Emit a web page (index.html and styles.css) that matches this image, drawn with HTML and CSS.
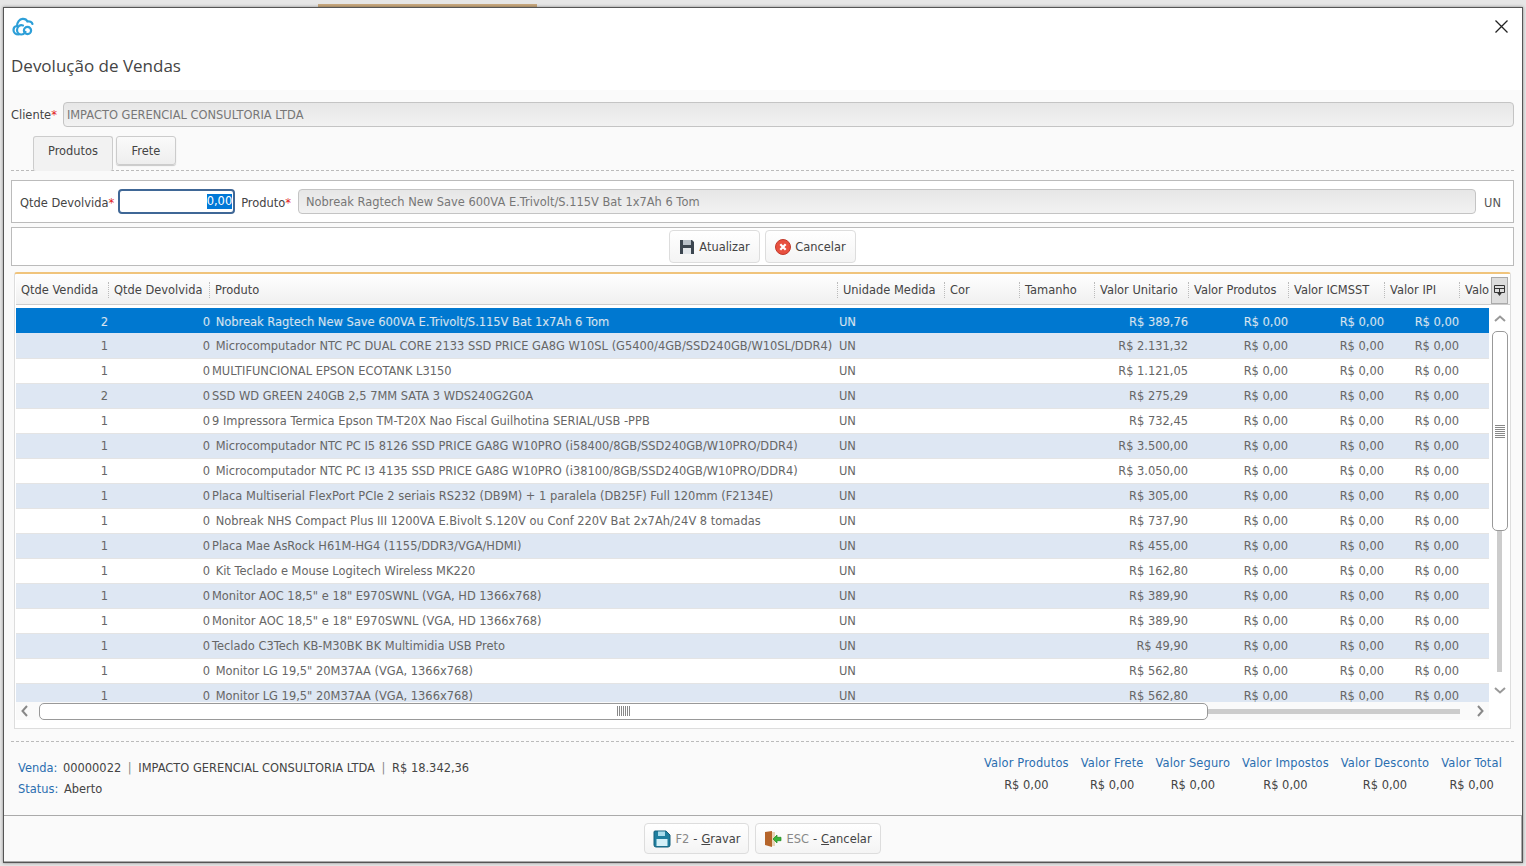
FILE: index.html
```html
<!DOCTYPE html>
<html lang="pt-BR">

<head>
    <meta charset="UTF-8">
    <title>Devolução de Vendas</title>
    <link rel="stylesheet" href="styles.css">
</head>

<body>
    <div class="backdrop">
        <div class="backdrop-tab"></div>
    </div>
    <div class="dialog">
        <div class="dialog-head">
            <div class="head-top">
                <svg class="logo" width="22" height="20" viewBox="0 0 22 20" fill="none" stroke="#2d9fd8" stroke-width="2.2" stroke-linecap="round">
                    <path d="M6.5 18.5C3.5 18.5 1.5 16.5 1.5 14C1.5 11.8 3 10.2 5 10C5 6.5 7.5 3 10.5 2.8C13 2.6 14.8 4 15.5 5.5C17.5 5 20 6 20.5 8" />
                    <path d="M11 9.5C8 8.5 5 10.5 5 14C5 16.8 7 18.5 9.5 18.5C11.5 18.5 12.5 17.5 13.5 16" />
                    <circle cx="15.5" cy="14.5" r="3.6" />
                </svg>
                <svg class="close" width="13" height="13" viewBox="0 0 13 13" stroke="#222" stroke-width="1.3">
                    <path d="M0.5 0.5L12.5 12.5M12.5 0.5L0.5 12.5" />
                </svg>
            </div>
            <h1>Devolução de Vendas</h1>
        </div>

        <div class="dialog-main">
            <div class="client-row">
                <label>Cliente<em>*</em></label>
                <div class="readonly-input client-input">IMPACTO GERENCIAL CONSULTORIA LTDA</div>
            </div>

            <div class="tabs">
                <div class="tab tab-active">Produtos</div>
                <div class="tab">Frete</div>
            </div>

            <div class="panel form-panel">
                <label>Qtde Devolvida<em>*</em></label>
                <div class="qty-input"><span class="selected-text">0,00</span></div>
                <label>Produto<em>*</em></label>
                <div class="readonly-input product-input">Nobreak Ragtech New Save 600VA E.Trivolt/S.115V Bat 1x7Ah 6 Tom</div>
                <span class="unit">UN</span>
            </div>

            <div class="panel button-panel">
                <div class="btn">
                    <svg width="16" height="16" viewBox="0 0 16 16">
                        <path d="M1 1H13L15 3V15H1Z" fill="#3c4650" />
                        <rect x="4" y="1" width="8" height="5" fill="#b8c0c8" />
                        <rect x="4" y="9" width="8" height="6" fill="#e4e8ec" />
                    </svg>
                    Atualizar
                </div>
                <div class="btn">
                    <svg width="16" height="16" viewBox="0 0 16 16">
                        <circle cx="8" cy="8" r="7.5" fill="#e8503f" stroke="#c0392b" />
                        <path d="M5.3 5.3L10.7 10.7M10.7 5.3L5.3 10.7" stroke="#fff" stroke-width="2.2" />
                    </svg>
                    Cancelar
                </div>
            </div>

            <div class="grid">
                <div class="grid-head">
                    <table class="grid-table">
                        <colgroup>
                            <col class="col-1"><col class="col-2"><col class="col-3"><col class="col-4"><col class="col-5"><col class="col-6"><col class="col-7"><col class="col-8"><col class="col-9"><col class="col-10"><col class="col-11">
                        </colgroup>
                        <tr>
                            <th><div class="first">Qtde Vendida</div></th>
                            <th><div>Qtde Devolvida</div></th>
                            <th><div>Produto</div></th>
                            <th><div>Unidade Medida</div></th>
                            <th><div>Cor</div></th>
                            <th><div>Tamanho</div></th>
                            <th><div>Valor Unitario</div></th>
                            <th><div>Valor Produtos</div></th>
                            <th><div>Valor ICMSST</div></th>
                            <th><div>Valor IPI</div></th>
                            <th><div>Valo</div></th>
                        </tr>
                    </table>
                    <div class="grid-menu">
                        <svg width="11" height="12" viewBox="0 0 11 12" fill="none" stroke="#333">
                            <path d="M0.5 7.5V0.5H10.5V7.5M0.5 3.5H10.5M5.5 3.5V7M0.5 7.5H3M8 7.5H10.5" />
                            <path d="M2.5 7H8.5L5.5 11Z" fill="#333" stroke="none" />
                        </svg>
                    </div>
                </div>

                <div class="grid-middle">
                    <div class="grid-body">
                        <table class="grid-table">
                            <colgroup>
                                <col class="col-1"><col class="col-2"><col class="col-3"><col class="col-4"><col class="col-5"><col class="col-6"><col class="col-7"><col class="col-8"><col class="col-9"><col class="col-10"><col class="col-11">
                            </colgroup>
                            <tr class="row-selected"><td class="num">2</td><td class="num">0</td><td> Nobreak Ragtech New Save 600VA E.Trivolt/S.115V Bat 1x7Ah 6 Tom</td><td>UN</td><td></td><td></td><td class="num">R$ 389,76</td><td class="num">R$ 0,00</td><td class="num">R$ 0,00</td><td class="num">R$ 0,00</td><td></td></tr>
                            <tr class="row-alt"><td class="num">1</td><td class="num">0</td><td> Microcomputador NTC PC DUAL CORE 2133 SSD PRICE GA8G W10SL (G5400/4GB/SSD240GB/W10SL/DDR4)</td><td>UN</td><td></td><td></td><td class="num">R$ 2.131,32</td><td class="num">R$ 0,00</td><td class="num">R$ 0,00</td><td class="num">R$ 0,00</td><td></td></tr>
                            <tr><td class="num">1</td><td class="num">0</td><td>MULTIFUNCIONAL EPSON ECOTANK L3150</td><td>UN</td><td></td><td></td><td class="num">R$ 1.121,05</td><td class="num">R$ 0,00</td><td class="num">R$ 0,00</td><td class="num">R$ 0,00</td><td></td></tr>
                            <tr class="row-alt"><td class="num">2</td><td class="num">0</td><td>SSD WD GREEN 240GB 2,5 7MM SATA 3 WDS240G2G0A</td><td>UN</td><td></td><td></td><td class="num">R$ 275,29</td><td class="num">R$ 0,00</td><td class="num">R$ 0,00</td><td class="num">R$ 0,00</td><td></td></tr>
                            <tr><td class="num">1</td><td class="num">0</td><td>9 Impressora Termica Epson TM-T20X Nao Fiscal Guilhotina SERIAL/USB -PPB</td><td>UN</td><td></td><td></td><td class="num">R$ 732,45</td><td class="num">R$ 0,00</td><td class="num">R$ 0,00</td><td class="num">R$ 0,00</td><td></td></tr>
                            <tr class="row-alt"><td class="num">1</td><td class="num">0</td><td> Microcomputador NTC PC I5 8126 SSD PRICE GA8G W10PRO (i58400/8GB/SSD240GB/W10PRO/DDR4)</td><td>UN</td><td></td><td></td><td class="num">R$ 3.500,00</td><td class="num">R$ 0,00</td><td class="num">R$ 0,00</td><td class="num">R$ 0,00</td><td></td></tr>
                            <tr><td class="num">1</td><td class="num">0</td><td> Microcomputador NTC PC I3 4135 SSD PRICE GA8G W10PRO (i38100/8GB/SSD240GB/W10PRO/DDR4)</td><td>UN</td><td></td><td></td><td class="num">R$ 3.050,00</td><td class="num">R$ 0,00</td><td class="num">R$ 0,00</td><td class="num">R$ 0,00</td><td></td></tr>
                            <tr class="row-alt"><td class="num">1</td><td class="num">0</td><td>Placa Multiserial FlexPort PCIe 2 seriais RS232 (DB9M) + 1 paralela (DB25F) Full 120mm (F2134E)</td><td>UN</td><td></td><td></td><td class="num">R$ 305,00</td><td class="num">R$ 0,00</td><td class="num">R$ 0,00</td><td class="num">R$ 0,00</td><td></td></tr>
                            <tr><td class="num">1</td><td class="num">0</td><td> Nobreak NHS Compact Plus III 1200VA E.Bivolt S.120V ou Conf 220V Bat 2x7Ah/24V 8 tomadas</td><td>UN</td><td></td><td></td><td class="num">R$ 737,90</td><td class="num">R$ 0,00</td><td class="num">R$ 0,00</td><td class="num">R$ 0,00</td><td></td></tr>
                            <tr class="row-alt"><td class="num">1</td><td class="num">0</td><td>Placa Mae AsRock H61M-HG4 (1155/DDR3/VGA/HDMI)</td><td>UN</td><td></td><td></td><td class="num">R$ 455,00</td><td class="num">R$ 0,00</td><td class="num">R$ 0,00</td><td class="num">R$ 0,00</td><td></td></tr>
                            <tr><td class="num">1</td><td class="num">0</td><td> Kit Teclado e Mouse Logitech Wireless MK220</td><td>UN</td><td></td><td></td><td class="num">R$ 162,80</td><td class="num">R$ 0,00</td><td class="num">R$ 0,00</td><td class="num">R$ 0,00</td><td></td></tr>
                            <tr class="row-alt"><td class="num">1</td><td class="num">0</td><td>Monitor AOC 18,5" e 18" E970SWNL (VGA, HD 1366x768)</td><td>UN</td><td></td><td></td><td class="num">R$ 389,90</td><td class="num">R$ 0,00</td><td class="num">R$ 0,00</td><td class="num">R$ 0,00</td><td></td></tr>
                            <tr><td class="num">1</td><td class="num">0</td><td>Monitor AOC 18,5" e 18" E970SWNL (VGA, HD 1366x768)</td><td>UN</td><td></td><td></td><td class="num">R$ 389,90</td><td class="num">R$ 0,00</td><td class="num">R$ 0,00</td><td class="num">R$ 0,00</td><td></td></tr>
                            <tr class="row-alt"><td class="num">1</td><td class="num">0</td><td>Teclado C3Tech KB-M30BK BK Multimidia USB Preto</td><td>UN</td><td></td><td></td><td class="num">R$ 49,90</td><td class="num">R$ 0,00</td><td class="num">R$ 0,00</td><td class="num">R$ 0,00</td><td></td></tr>
                            <tr><td class="num">1</td><td class="num">0</td><td> Monitor LG 19,5" 20M37AA (VGA, 1366x768)</td><td>UN</td><td></td><td></td><td class="num">R$ 562,80</td><td class="num">R$ 0,00</td><td class="num">R$ 0,00</td><td class="num">R$ 0,00</td><td></td></tr>
                            <tr class="row-alt"><td class="num">1</td><td class="num">0</td><td> Monitor LG 19,5" 20M37AA (VGA, 1366x768)</td><td>UN</td><td></td><td></td><td class="num">R$ 562,80</td><td class="num">R$ 0,00</td><td class="num">R$ 0,00</td><td class="num">R$ 0,00</td><td></td></tr>
                        </table>
                    </div>

                    <div class="vscroll">
                        <svg class="chevron-up" width="12" height="7" viewBox="0 0 12 7" fill="none" stroke="#999" stroke-width="2"><path d="M1 6L6 1.5L11 6" /></svg>
                        <div class="vthumb"><div class="vgrip"></div></div>
                        <div class="vtrack"></div>
                        <svg class="chevron-down" width="12" height="7" viewBox="0 0 12 7" fill="none" stroke="#999" stroke-width="2"><path d="M1 1L6 5.5L11 1" /></svg>
                    </div>
                </div>

                <div class="hscroll">
                    <svg class="chevron-left" width="7" height="12" viewBox="0 0 7 12" fill="none" stroke="#888" stroke-width="2"><path d="M6 1L1.5 6L6 11" /></svg>
                    <div class="hthumb"><div class="hgrip"></div></div>
                    <div class="htrack"></div>
                    <svg class="chevron-right" width="7" height="12" viewBox="0 0 7 12" fill="none" stroke="#888" stroke-width="2"><path d="M1 1L5.5 6L1 11" /></svg>
                </div>
            </div>

            <div class="summary">
                <div class="sale-info">
                    <div><span class="info-label">Venda:</span> 00000022 <span class="pipe">|</span> IMPACTO GERENCIAL CONSULTORIA LTDA <span class="pipe">|</span> R$ 18.342,36</div>
                    <div><span class="info-label">Status:</span> Aberto</div>
                </div>
                <div class="totals">
                    <div class="total"><span class="info-label">Valor Produtos</span><span>R$ 0,00</span></div>
                    <div class="total"><span class="info-label">Valor Frete</span><span>R$ 0,00</span></div>
                    <div class="total"><span class="info-label">Valor Seguro</span><span>R$ 0,00</span></div>
                    <div class="total"><span class="info-label">Valor Impostos</span><span>R$ 0,00</span></div>
                    <div class="total"><span class="info-label">Valor Desconto</span><span>R$ 0,00</span></div>
                    <div class="total"><span class="info-label">Valor Total</span><span>R$ 0,00</span></div>
                </div>
            </div>
        </div>

        <div class="dialog-foot">
            <div class="btn btn-foot">
                <svg width="18" height="18" viewBox="0 0 18 18">
                    <path d="M2 1H13L17 5V15Q17 17 15 17H3Q1 17 1 15V2Q1 1 2 1Z" fill="#1f7f9f" stroke="#17617c" />
                    <rect x="5" y="1.5" width="7" height="4.5" fill="#a8dcec" />
                    <rect x="3.5" y="9" width="11" height="7" fill="#d4f0f8" />
                </svg>
                <span class="key">F2</span> - <span><u>G</u>ravar</span>
            </div>
            <div class="btn btn-foot">
                <svg width="18" height="18" viewBox="0 0 18 18">
                    <path d="M1 2L8 1V17L1 15Z" fill="#b5652b" />
                    <path d="M8 2H11V16H8Z" fill="#e8d4b8" />
                    <path d="M9 9L13 5V7.3H17V10.7H13V13Z" fill="#3ab53a" stroke="#1f8a1f" stroke-width="0.7" />
                </svg>
                <span class="key">ESC</span> - <span><u>C</u>ancelar</span>
            </div>
        </div>
    </div>
</body>

</html>
```
FILE: styles.css
```css
body {
    font-family: "DejaVu Sans", Tahoma, sans-serif;
    font-size: 11.45px;
    color: #444;
    background-color: #e6e6e6;
    margin: 0;
    height: 866px;
    overflow: hidden;
}

.backdrop {
    height: 7px;
    padding-top: 4px;
    box-sizing: border-box;
}

.backdrop-tab {
    width: 219px;
    height: 3px;
    margin-left: 318px;
    background-color: #c9a97e;
}

.dialog {
    display: flex;
    flex-direction: column;
    width: 1520px;
    height: 856px;
    margin-left: 3px;
    box-sizing: border-box;
    border: 1px solid #555;
    background-color: #fafafa;
    box-shadow: 0 0 3px rgba(0, 0, 0, 0.4);
}

.dialog-head {
    height: 82px;
    flex-shrink: 0;
    background-color: #fff;
    padding: 8px 14px 0 8px;
    box-sizing: border-box;
}

.head-top {
    display: flex;
    justify-content: space-between;
    align-items: flex-start;
}

.close {
    margin-top: 4px;
}

h1 {
    font-family: "Open Sans", sans-serif;
    font-size: 17px;
    font-weight: 400;
    color: #444;
    margin: 18px 0 0 -1px;
    line-height: 24px;
}

.dialog-main {
    flex: 1;
    padding: 12px 8px 0 7px;
    min-height: 0;
}

label {
    white-space: nowrap;
    color: #444;
}

em {
    color: #e02020;
    font-style: normal;
}

.client-row {
    display: flex;
    align-items: center;
    gap: 6px;
    height: 25px;
}

.readonly-input {
    height: 25px;
    line-height: 24px;
    box-sizing: border-box;
    border: 1px solid #c4c4c4;
    border-radius: 4px;
    background: linear-gradient(#e6e6e6, #f2f2f2);
    color: #777;
    padding: 0 3px;
    flex: 1;
}

.tabs {
    display: flex;
    align-items: flex-start;
    gap: 3px;
    height: 34px;
    margin-top: 9px;
    padding-left: 22px;
    border-bottom: 1px dashed #bbb;
}

.tab {
    width: 60px;
    height: 29px;
    line-height: 29px;
    text-align: center;
    box-sizing: border-box;
    border: 1px solid #ccc;
    border-radius: 3px;
    background: linear-gradient(#fafafa, #eee);
    box-shadow: 0 1px 1px rgba(0, 0, 0, 0.2);
}

.tab-active {
    width: 80px;
    height: 35px;
    line-height: 29px;
    border-bottom: none;
    background: #f2f2f2;
    box-shadow: none;
}

.panel {
    border: 1px solid #bbb;
    background-color: #fff;
    box-sizing: border-box;
}

.form-panel {
    display: flex;
    align-items: center;
    height: 43px;
    margin-top: 9px;
    padding: 0 12px 0 8px;
}

.form-panel label,
.unit {
    padding-top: 2px;
}

.qty-input {
    width: 117px;
    height: 25px;
    line-height: 21px;
    box-sizing: border-box;
    border: 2px solid #3f6796;
    border-radius: 4px;
    margin: 0 6px 0 4px;
    text-align: right;
    padding-right: 1px;
}

.selected-text {
    background-color: #0078d7;
    color: #fff;
    display: inline-block;
    line-height: 15px;
}

.product-input {
    margin-left: 7px;
    padding: 0 7px;
}

.unit {
    margin-left: 8px;
    color: #555;
}

.button-panel {
    display: flex;
    justify-content: center;
    gap: 5px;
    height: 39px;
    margin-top: 4px;
    padding-top: 2px;
}

.btn {
    display: flex;
    align-items: center;
    justify-content: center;
    gap: 4px;
    width: 91px;
    height: 33px;
    box-sizing: border-box;
    border: 1px solid #ddd;
    border-radius: 4px;
    background: linear-gradient(#fff, #f4f4f4);
    color: #444;
}

.grid {
    display: flex;
    flex-direction: column;
    width: 1497px;
    height: 457px;
    margin: 6px 0 0 3px;
    box-sizing: border-box;
    border: 1px solid #ddd;
    border-top: 2px solid #f0c47c;
    border-radius: 3px 3px 0 0;
    background-color: #fff;
    padding-left: 1px;
}

.grid-head {
    display: flex;
    height: 31px;
    flex-shrink: 0;
    border-bottom: 1px solid #ccc;
    box-sizing: border-box;
    background: linear-gradient(#fff, #f0f0f0);
}

.grid-table {
    table-layout: fixed;
    border-collapse: collapse;
    width: 1473px;
    flex-shrink: 0;
}

.col-1 { width: 93px; }
.col-2 { width: 102px; }
.col-3 { width: 627px; }
.col-4 { width: 107px; }
.col-5 { width: 75px; }
.col-6 { width: 75px; }
.col-7 { width: 94px; }
.col-8 { width: 100px; }
.col-9 { width: 96px; }
.col-10 { width: 75px; }
.col-11 { width: 29px; }

th {
    padding: 1px 0 0;
    font-weight: 400;
    text-align: left;
    white-space: nowrap;
    color: #444;
}

th div {
    margin-left: -1px;
    padding-left: 5px;
    height: 16px;
    line-height: 16px;
    border-left: 1px dotted #bbb;
}

th:nth-child(3) div {
    margin-left: -2px;
}

th .first {
    border-left-color: transparent;
}

.grid-menu {
    display: flex;
    align-items: center;
    justify-content: center;
    width: 17px;
    height: 27px;
    margin: 3px 0 0 2px;
    box-sizing: border-box;
    border: 1px solid #aaa;
    background-color: #ddd;
}

.grid-middle {
    display: flex;
    height: 397px;
    flex-shrink: 0;
}

.grid-body {
    width: 1473px;
    padding-top: 3px;
    box-sizing: border-box;
    overflow: hidden;
}

td {
    height: 25px;
    box-sizing: border-box;
    padding: 0 1px;
    white-space: pre;
    overflow: hidden;
    color: #666;
    border-bottom: 1px solid #e4e4e4;
}

td.num {
    text-align: right;
}

.row-alt {
    background-color: #dee7f3;
}

.row-selected {
    background-color: #0078d0;
}

.row-selected td {
    padding-top: 2px;
    color: #d9e4ef;
    text-shadow: 1px 0 0 rgba(255, 255, 255, 0.15);
    border-bottom: none;
}

.row-selected + tr td {
    padding-top: 1px;
}

.vscroll {
    display: flex;
    flex-direction: column;
    align-items: center;
    width: 21px;
    padding-top: 10px;
    box-sizing: border-box;
}

.vthumb {
    display: flex;
    align-items: center;
    justify-content: center;
    width: 16px;
    height: 200px;
    margin-top: 9px;
    flex-shrink: 0;
    box-sizing: border-box;
    border: 1px solid #999;
    border-radius: 5px;
    background-color: #fff;
}

.vgrip {
    width: 10px;
    height: 13px;
    background: repeating-linear-gradient(#888 0, #888 1px, #fff 1px, #fff 2px);
}

.vtrack {
    width: 5px;
    height: 141px;
    background-color: #ccc;
}

.chevron-down {
    margin-top: 15px;
}

.hscroll {
    display: flex;
    align-items: center;
    height: 18px;
    flex-shrink: 0;
    padding-left: 5px;
    background-color: #fafafa;
    width: 1473px;
    box-sizing: border-box;
}

.hthumb {
    display: flex;
    align-items: center;
    justify-content: center;
    width: 1169px;
    height: 17px;
    margin-left: 11px;
    flex-shrink: 0;
    box-sizing: border-box;
    border: 1px solid #999;
    border-radius: 5px;
    background-color: #fff;
}

.hgrip {
    width: 13px;
    height: 10px;
    background: repeating-linear-gradient(90deg, #888 0, #888 1px, #fff 1px, #fff 2px);
}

.htrack {
    width: 252px;
    height: 5px;
    background-color: #ccc;
}

.chevron-right {
    margin-left: 17px;
}

.summary {
    display: flex;
    justify-content: space-between;
    margin-top: 12px;
    padding: 14px 12px 0 7px;
    border-top: 1px dashed #bbb;
    height: 61px;
    box-sizing: border-box;
    color: #444;
}

.sale-info {
    display: flex;
    flex-direction: column;
    gap: 6px;
    padding-top: 5px;
    line-height: 15px;
}

.info-label {
    color: #2a6eb0;
    margin-right: 2px;
}

.pipe {
    color: #888;
    margin: 0 3px;
}

.totals {
    display: flex;
    gap: 12px;
    line-height: 15px;
}

.total {
    display: flex;
    flex-direction: column;
    align-items: center;
    gap: 7px;
}

.total .info-label {
    margin-right: 0;
    letter-spacing: 0.15px;
}

.dialog-foot {
    display: flex;
    justify-content: center;
    gap: 6px;
    height: 47px;
    flex-shrink: 0;
    padding-top: 7px;
    box-sizing: border-box;
    border: 1px solid #aaa;
    border-left: none;
}

.btn-foot {
    width: auto;
    height: 31px;
    padding: 0 8px;
    gap: 4px;
}

.key {
    color: #888;
}
```
